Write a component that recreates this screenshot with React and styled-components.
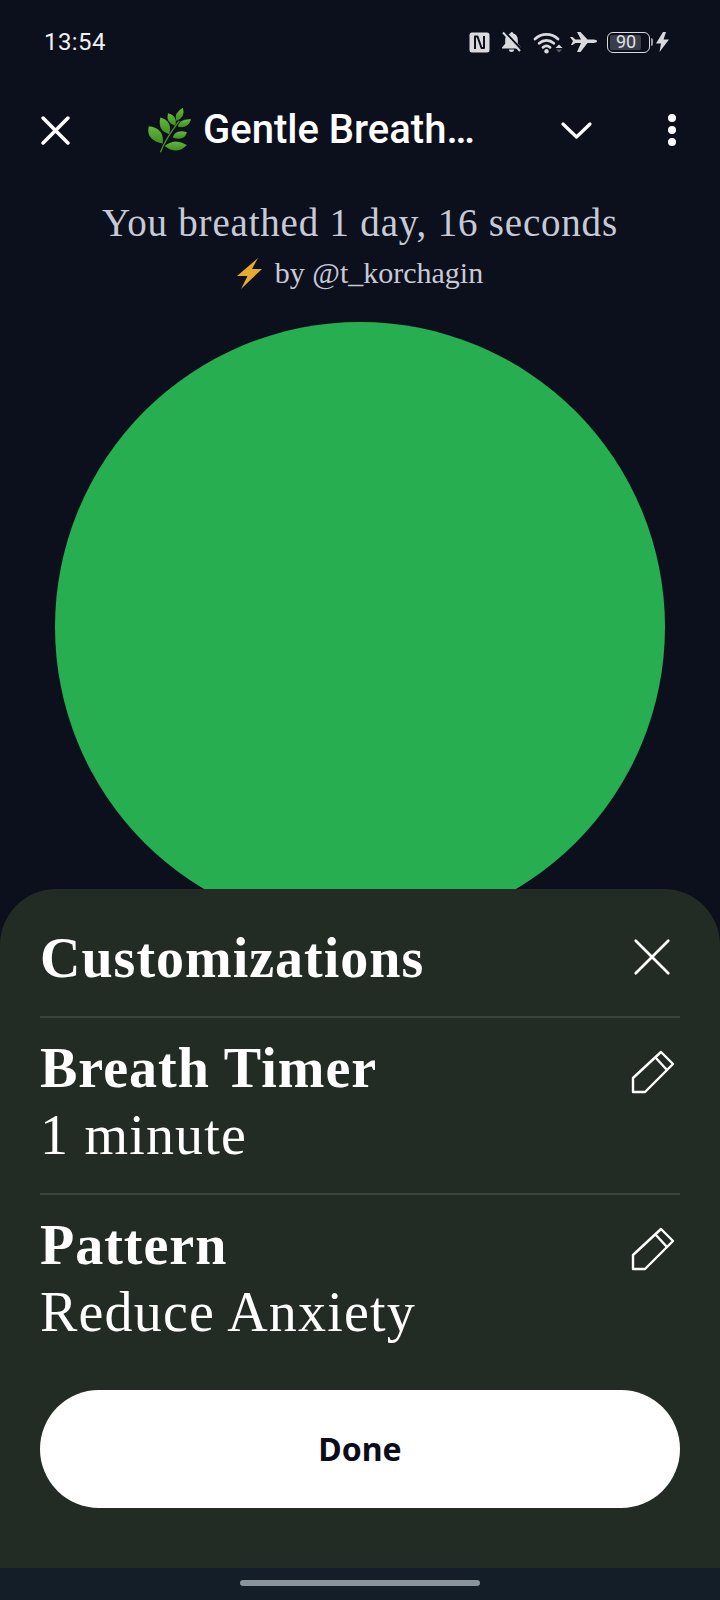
import React from "react";
import styled, { createGlobalStyle } from "styled-components";

const GlobalStyle = createGlobalStyle`
  html, body { margin: 0; padding: 0; background: #0c0f1c; }
  #root { width: 720px; height: 1600px; overflow: hidden; }
`;

const Page = styled.div`
  position: relative;
  width: 720px;
  height: 1600px;
  overflow: hidden;
  background: #0c0f1c;
  display: flex;
  flex-direction: column;
  align-items: center;
`;

const StatusBar = styled.div`
  align-self: stretch;
  display: flex;
  align-items: center;
  justify-content: space-between;
  height: 28px;
  padding: 28px 51px 44px 44px;
`;

const Clock = styled.span`
  font: 400 24px/28px Roboto, sans-serif;
  letter-spacing: 0.4px;
  color: #f0f0f2;
`;

const StatusIcons = styled.div`
  display: flex;
  align-items: center;
  color: #d9d9de;
`;

const StatusSlot = styled.span`
  display: flex;
  margin-left: ${({ $gap }) => $gap || 0}px;
`;

const Battery = styled.span`
  position: relative;
  box-sizing: border-box;
  width: 43px;
  height: 21px;
  margin-left: 10px;
  padding-right: 5px;
  display: flex;
  align-items: center;
  justify-content: center;
  border: 1.5px solid #d9d9de;
  border-radius: 6px;

  &::before {
    content: "";
    position: absolute;
    left: 2px;
    top: 2px;
    bottom: 2px;
    width: 31px;
    border-radius: 2px;
    background: #3a3d4a;
  }

  &::after {
    content: "";
    position: absolute;
    right: -4px;
    top: 5px;
    width: 2px;
    height: 8px;
    border-radius: 0 2px 2px 0;
    background: #9a9aa2;
  }
`;

const BatteryLevel = styled.span`
  position: relative;
  font: 400 18px/18px Roboto, sans-serif;
  color: #e2e2e6;
`;

const Header = styled.div`
  align-self: stretch;
  display: flex;
  align-items: center;
  height: 60px;
  padding: 0 44px 0 41px;
  color: #fff;
`;

const TitleGroup = styled.div`
  display: flex;
  align-items: center;
  gap: 11px;
  margin-left: 77px;
  flex: 1;
`;

const Title = styled.span`
  font: 500 40px/60px Roboto, sans-serif;
  color: #fff;
  white-space: nowrap;
`;

const ChevronSlot = styled.span`
  display: flex;
  margin-right: 76px;
`;

const Credit = styled.div`
  margin-top: 40px;
  font: 400 39px/46px "Liberation Serif", serif;
  letter-spacing: 0.8px;
  color: #c6cad6;
`;

const Author = styled.div`
  display: flex;
  align-items: center;
  gap: 13px;
  margin-top: 10px;
  font: 400 30px/34px "Liberation Serif", serif;
  color: #c6cad6;
`;

const BreathCircle = styled.div`
  flex: none;
  margin-top: 32px;
  width: 610px;
  height: 610px;
  border-radius: 50%;
  background: #27ae50;
`;

const BottomDock = styled.div`
  position: absolute;
  left: 0;
  right: 0;
  bottom: 0;
`;

const Sheet = styled.div`
  background: #232b25;
  border-radius: 56px 56px 0 0;
  padding: 0 40px 60px;
`;

const SheetRow = styled.div`
  display: flex;
  align-items: flex-start;
  justify-content: space-between;
  padding: ${({ $head }) => ($head ? "38px 0 27px" : "19px 0 27px")};
  border-bottom: ${({ $last }) => ($last ? "none" : "2px solid #3b433d")};
`;

const RowTitle = styled.div`
  font: 700 56px/62px "Liberation Serif", serif;
  letter-spacing: 1px;
  color: #fff;
`;

const RowValue = styled.div`
  margin-top: 5px;
  font: 400 56px/62px "Liberation Serif", serif;
  letter-spacing: 1.2px;
  color: #fff;
`;

const RowIcon = styled.span`
  display: flex;
  color: #fff;
  margin: ${({ $margin }) => $margin};
`;

const DoneButton = styled.button`
  display: block;
  width: 640px;
  height: 118px;
  margin-top: 20px;
  border: none;
  border-radius: 59px;
  background: #fff;
  color: #0b0d1a;
  font: 700 32px/44px "Noto Sans", sans-serif;
`;

const NavBar = styled.div`
  height: 32px;
  background: #141e28;
  display: flex;
  justify-content: center;
  padding-top: 12px;
  box-sizing: border-box;
`;

const NavHandle = styled.div`
  width: 240px;
  height: 6px;
  border-radius: 3px;
  background: #8a939c;
`;

const NfcIcon = () => (
  <svg width="21" height="21" viewBox="0 0 21 21" fill="none">
    <rect x="0.5" y="0.5" width="20" height="20" rx="2.5" fill="currentColor" />
    <path d="M6 17V4.500h2.500l4 11.500H15V4" stroke="#0c0f1c" strokeWidth="2" strokeLinejoin="round" />
  </svg>
);

const BellOffIcon = () => (
  <svg width="21" height="22" viewBox="0 0 21 22">
    <path
      fill="currentColor"
      d="M10.500 1c1 0 1.700.7 1.800 1.600 2.800.7 4.500 3 4.500 6v3.800L20 16.500v1H1v-1l3.200-3.800V8.600c0-.9.2-1.700.5-2.400zM8 18.500h5a2.500 2.500 0 0 1-5 0z"
    />
    <path d="M3.500 0.500l17 18" stroke="#0c0f1c" strokeWidth="2" />
    <path d="M2 1.500l17 18.500" stroke="currentColor" strokeWidth="2" />
  </svg>
);

const WifiIcon = () => (
  <svg width="30" height="23" viewBox="0 0 30 23" fill="none" stroke="currentColor" strokeWidth="2.800" strokeLinecap="round">
    <path d="M2 8C8.500 1.800 18.500 1.800 25 8" />
    <path d="M6.200 12.300C10.500 8.500 16.500 8.500 20.800 12.300" />
    <path d="M10 16.300C12.300 14.500 14.700 14.500 17 16.300" />
    <circle cx="13.500" cy="20.300" r="2.200" fill="currentColor" stroke="none" />
    <path d="M26 13.500l3.500 3.500h-7z" fill="currentColor" stroke="none" />
    <path d="M23 18.500h6l-3 3z" fill="currentColor" stroke="none" opacity="0.4" />
  </svg>
);

const PlaneIcon = () => (
  <svg width="27" height="20" viewBox="0 0 27 20">
    <path
      fill="currentColor"
      d="M0 5h2.500l3 2.500H11L7 0h3.500l7 7.500h6C25.500 7.500 27 8.200 27 9.300S25.500 11 23.500 11h-6l-7 9H7l4-9H5.500l-3 2H1l2-4z"
    />
  </svg>
);

const ChargeIcon = () => (
  <svg width="13" height="20" viewBox="0 0 13 20">
    <path fill="currentColor" d="M7 0L0 11.500h5L3.500 20 13 7.500H7.500L10 0z" />
  </svg>
);

const CloseIcon = ({ size, weight }) => (
  <svg width={size} height={size} viewBox="0 0 28 28" fill="none" stroke="currentColor" strokeWidth={weight} strokeLinecap="round">
    <path d="M2 2l24 24M26 2L2 26" />
  </svg>
);

const ChevronIcon = () => (
  <svg width="31" height="17" viewBox="0 0 31 17" fill="none" stroke="currentColor" strokeWidth="3.200" strokeLinecap="round" strokeLinejoin="round">
    <path d="M2 2l13.500 13L29 2" />
  </svg>
);

const DotsIcon = () => (
  <svg width="8" height="32" viewBox="0 0 8 32" fill="currentColor">
    <circle cx="4" cy="4" r="4" />
    <circle cx="4" cy="16" r="4" />
    <circle cx="4" cy="28" r="4" />
  </svg>
);

const PencilIcon = () => (
  <svg width="44" height="44" viewBox="0 0 44 44" fill="none" stroke="currentColor" strokeWidth="2.400" strokeLinejoin="round">
    <path d="M2 28L30 2l12 12-28 28H2z" />
    <path d="M24 7l12 13" />
  </svg>
);

const HerbEmoji = () => (
  <svg width="45" height="48" viewBox="15 15 135 145" role="img" aria-label="herb">
    <defs>
      <linearGradient id="leaf" x1="0" y1="0" x2="0" y2="1">
        <stop offset="0" stopColor="#66b83c" />
        <stop offset="1" stopColor="#3e8d25" />
      </linearGradient>
    </defs>
    <g fill="url(#leaf)">
      <path d="M68 136Q100 110 135 133Q105 165 68 136" />
      <path d="M62 128Q10 118 20 76Q68 82 62 128" />
      <path d="M82 100Q45 90 55 50Q92 60 82 100" />
      <path d="M100 75Q70 65 78 37Q108 45 100 75" />
      <path d="M103 60Q95 35 123 20Q132 48 103 60" />
      <path d="M108 78Q112 52 148 55Q138 85 108 78" />
      <path d="M92 110Q100 85 135 94Q128 122 92 110" />
    </g>
    <path d="M55 155Q70 115 112 60" fill="none" stroke="#4d8f2c" strokeWidth="4" />
  </svg>
);

const BoltEmoji = () => (
  <svg width="25" height="31" viewBox="0 0 25 31" role="img" aria-label="zap">
    <path fill="#e5ab2e" d="M21 0L0 18h10.500L4 31l21-20H15z" />
  </svg>
);

const App = () => (
  <Page>
    <GlobalStyle />
    <StatusBar>
      <Clock>13:54</Clock>
      <StatusIcons>
        <StatusSlot><NfcIcon /></StatusSlot>
        <StatusSlot $gap={11}><BellOffIcon /></StatusSlot>
        <StatusSlot $gap={11}><WifiIcon /></StatusSlot>
        <StatusSlot $gap={7}><PlaneIcon /></StatusSlot>
        <Battery><BatteryLevel>90</BatteryLevel></Battery>
        <StatusSlot $gap={6}><ChargeIcon /></StatusSlot>
      </StatusIcons>
    </StatusBar>

    <Header>
      <CloseIcon size={29} weight={3.400} />
      <TitleGroup>
        <HerbEmoji />
        <Title>Gentle Breath…</Title>
      </TitleGroup>
      <ChevronSlot><ChevronIcon /></ChevronSlot>
      <DotsIcon />
    </Header>

    <Credit>You breathed 1 day, 16 seconds</Credit>
    <Author>
      <BoltEmoji />
      by @t_korchagin
    </Author>

    <BreathCircle />

    <BottomDock>
      <Sheet>
        <SheetRow $head>
          <RowTitle>Customizations</RowTitle>
          <RowIcon $margin="11px 9px 0 0"><CloseIcon size={38} weight={2} /></RowIcon>
        </SheetRow>
        <SheetRow>
          <div>
            <RowTitle>Breath Timer</RowTitle>
            <RowValue>1 minute</RowValue>
          </div>
          <RowIcon $margin="13px 5px 0 0"><PencilIcon /></RowIcon>
        </SheetRow>
        <SheetRow $last>
          <div>
            <RowTitle>Pattern</RowTitle>
            <RowValue>Reduce Anxiety</RowValue>
          </div>
          <RowIcon $margin="13px 5px 0 0"><PencilIcon /></RowIcon>
        </SheetRow>
        <DoneButton>Done</DoneButton>
      </Sheet>
      <NavBar><NavHandle /></NavBar>
    </BottomDock>
  </Page>
);

export default App;
